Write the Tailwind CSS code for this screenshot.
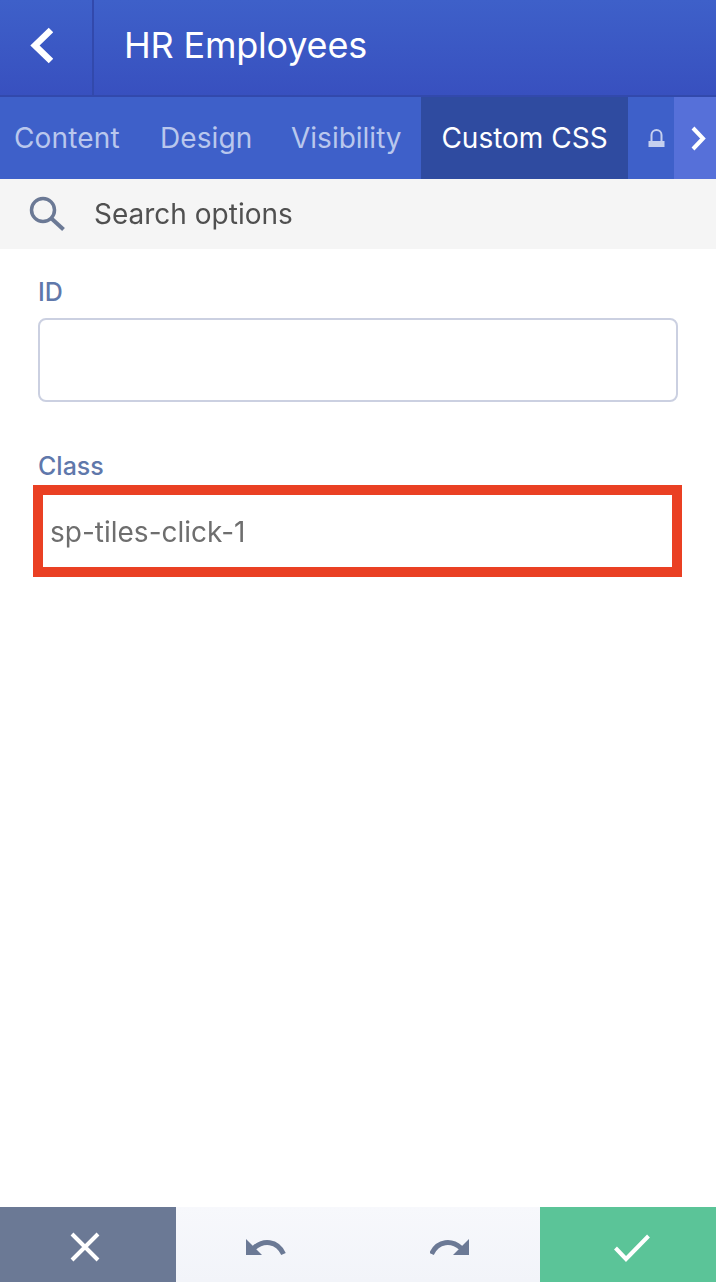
<!DOCTYPE html>
<html><head><meta charset="utf-8"><script src="https://cdn.jsdelivr.net/npm/@tailwindcss/browser@4"></script></head>
<body class="m-0 bg-white">
<div class="w-[716px] h-[1282px] flex flex-col overflow-hidden font-['Inter',sans-serif]">
  <header class="h-[97px] flex border-b-2 border-[#3249ac] bg-gradient-to-b from-[#3e60c9] to-[#3850bf]">
    <div class="w-[94px] border-r-2 border-[#3249ac] flex items-center pl-[29px] pb-[4px]">
      <svg width="24" height="38" viewBox="0 0 24 38"><path d="M22 3 L6 18.5 L22 34" fill="none" stroke="#fff" stroke-width="6.5"/></svg>
    </div>
    <div class="pl-[30px] flex items-center text-white text-[36px] tracking-[-0.2px] leading-none pb-[5px]">HR Employees</div>
  </header>
  <nav class="h-[82px] flex bg-[#3e60c9] text-[#b9c7ed] text-[28px] relative">
    <div class="w-[145px] pl-[14px] flex items-center tracking-[0.15px]">Content</div>
    <div class="w-[131px] pl-[15px] flex items-center tracking-[0.1px]">Design</div>
    <div class="w-[129px] pl-[15px] flex items-center">Visibility</div>
    <div class="ml-[16px] w-[207px] bg-[#2f4ba0] text-white flex items-center justify-center">Custom CSS</div>
    <div class="w-[46px] flex items-center pl-[20px]">
      <svg width="17" height="18" viewBox="0 0 17 18"><path d="M3.5 13V6a5 5 0 0 1 10 0V13" fill="none" stroke="#c5d0ef" stroke-width="2"/><rect x="0.5" y="12" width="16" height="6" fill="#c5d0ef"/></svg>
    </div>
    <div class="w-[42px] bg-[#5670d9] flex items-center pl-[17px]">
      <svg width="16" height="25" viewBox="0 0 16 25"><path d="M2 2 L12 12.5 L2 23" fill="none" stroke="#fff" stroke-width="4"/></svg>
    </div>
  </nav>
  <div class="h-[70px] bg-[#f5f5f5] flex items-center">
    <svg class="ml-[29px]" width="37" height="36" viewBox="0 0 37 36"><circle cx="14" cy="14" r="11.5" fill="none" stroke="#6b7995" stroke-width="3.5"/><path d="M22.5 22.5 L34.5 33.5" stroke="#6b7995" stroke-width="4"/></svg>
    <span class="ml-[28px] text-[#505050] text-[28px] leading-none will-change-transform">Search options</span>
  </div>
  <main class="flex-1 bg-white px-[38px] pt-[28px]">
    <div class="text-[#5f78ab] text-[25px] leading-[30px] font-medium">ID</div>
    <div class="mt-[11px] h-[84px] w-[640px] border-2 border-[#cbd0e1] rounded-[8px] bg-white"></div>
    <div class="mt-[49px] text-[#5f78ab] text-[25px] leading-[30px] font-medium">Class</div>
    <div class="-ml-[5px] mt-[4px] w-[649px] h-[92px] border-[10px] border-[#ea4023] flex items-center pl-[7px] pt-[2px] text-[#6e6e6e] text-[28px] bg-white"><span class="will-change-transform">sp-tiles-click-1</span></div>
  </main>
  <footer class="h-[75px] flex">
    <div class="w-[176px] bg-[#6b7995] flex items-center justify-center pr-[6px] pt-[5px]">
      <svg width="30" height="30" viewBox="0 0 30 30"><path d="M2 2 L28 28 M28 2 L2 28" stroke="#fff" stroke-width="4"/></svg>
    </div>
    <div class="w-[364px] bg-gradient-to-b from-[#f7f8fc] to-[#f2f4f9] flex">
      <div class="ml-[70px] mt-[32px]">
        <svg width="40" height="18" viewBox="0 0 40 18"><path d="M0 0 L0 16 L16 16 Z" fill="#6b7995"/><path d="M8 9 C17 1 31 1 37.5 15" fill="none" stroke="#6b7995" stroke-width="5"/></svg>
      </div>
      <div class="ml-[144px] mt-[32px]">
        <svg width="40" height="18" viewBox="0 0 40 18"><path d="M39 0 L39 16 L23 16 Z" fill="#6b7995"/><path d="M31 9 C22 1 8 1 1.5 15" fill="none" stroke="#6b7995" stroke-width="5"/></svg>
      </div>
    </div>
    <div class="w-[176px] bg-[#5bc498] flex items-center justify-center pl-[8px] pt-[6px]">
      <svg width="36" height="28" viewBox="0 0 36 28"><path d="M1.5 14 L12 25 L34.5 2" fill="none" stroke="#fff" stroke-width="4"/></svg>
    </div>
  </footer>
</div>
</body></html>
